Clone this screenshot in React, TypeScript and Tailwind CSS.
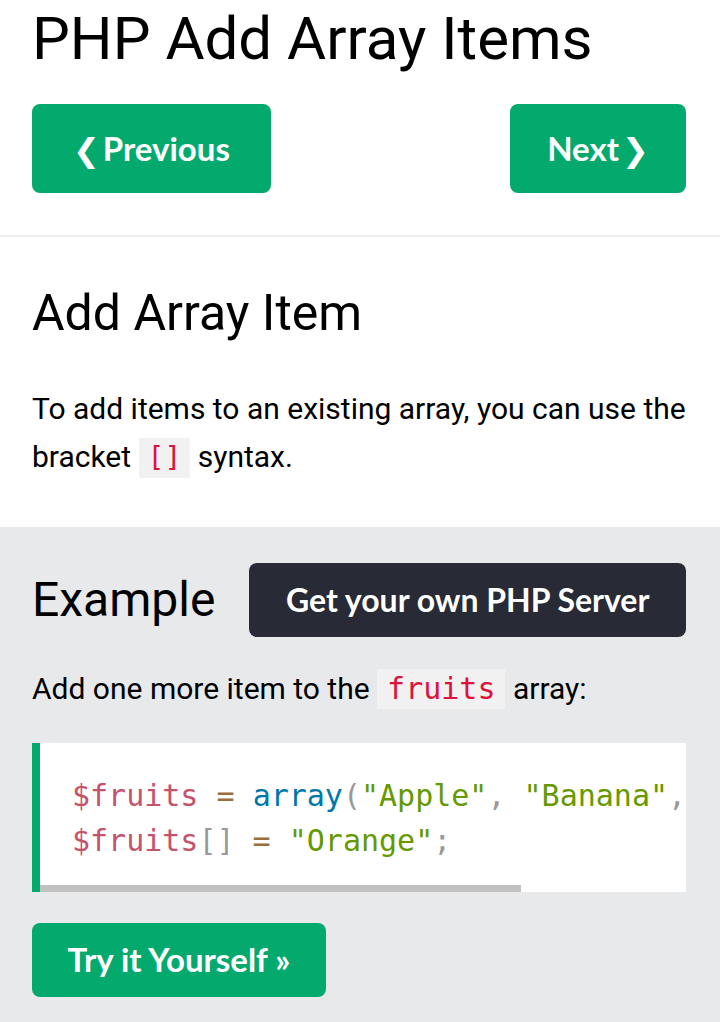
import React from 'react';

const sans = "font-['Roboto','Liberation_Sans',sans-serif]";
const btnFont = "font-['Lato','Open_Sans',sans-serif]";
const mono = "font-['DejaVu_Sans_Mono','Liberation_Mono',monospace]";

const App = () => {
  return (
    <div className={`w-[720px] bg-white text-black ${sans}`}>
      <div className="pl-[32px] pr-[34px] pt-[4px] pb-[42px]">
        <h1 className="text-[60px] leading-[70px] font-normal">PHP Add Array Items</h1>
        <div className="mt-[30px] flex justify-between">
          <button
            className={`w-[239px] h-[89px] rounded-[8px] bg-[#04AA6D] text-white text-[33px] font-bold ${btnFont}`}
          >
            <span className="font-['DejaVu_Sans',sans-serif] text-[32px] mr-[3px]">❮</span>Previous
          </button>
          <button
            className={`w-[176px] h-[89px] rounded-[8px] bg-[#04AA6D] text-white text-[33px] font-bold ${btnFont}`}
          >
            Next<span className="font-['DejaVu_Sans',sans-serif] text-[32px] ml-[3px]">❯</span>
          </button>
        </div>
      </div>
      <div className="h-[2px] bg-[#eeeeee]" />

      <div className="pl-[32px] pr-[34px] pt-[46px] pb-[46px]">
        <h2 className="text-[50px] leading-[60px] font-normal">Add Array Item</h2>
        <p className="mt-[42px] text-[30px] leading-[48px]">
          To add items to an existing array, you can use the bracket{' '}
          <code
            className={`inline-block bg-[#f1f1f1] text-[#dc143c] px-[9px] leading-[40px] text-[28px] ${mono}`}
          >
            []
          </code>{' '}
          syntax.
        </p>
      </div>

      <div className="bg-[#E7E9EB] pl-[32px] pr-[34px] pt-[36px] pb-[25px]">
        <div className="flex items-center gap-[34px]">
          <h2 className="text-[48px] leading-[60px] font-normal">Example</h2>
          <button
            className={`flex-1 h-[74px] rounded-[8px] bg-[#282A35] text-white text-[32px] font-bold ${btnFont}`}
          >
            Get your own PHP Server
          </button>
        </div>
        <p className="mt-[28px] text-[30px] leading-[48px]">
          Add one more item to the{' '}
          <code
            className={`inline-block bg-[#f1f1f1] text-[#dc143c] px-[10px] leading-[40px] text-[30px] ${mono}`}
          >
            fruits
          </code>{' '}
          array:
        </p>

        <div className="mt-[30px] bg-white border-l-[8px] border-[#04AA6D]">
          <div
            className={`overflow-hidden whitespace-pre pl-[32px] pt-[30px] pb-[22px] text-[30px] leading-[45px] ${mono}`}
          >
            <div>
              <span className="text-[#c6536c]">$fruits</span>
              <span className="text-[#9a6e3a]"> = </span>
              <span className="text-[#0077aa]">array</span>
              <span className="text-[#999999]">(</span>
              <span className="text-[#669900]">"Apple"</span>
              <span className="text-[#999999]">, </span>
              <span className="text-[#669900]">"Banana"</span>
              <span className="text-[#999999]">, </span>
              <span className="text-[#669900]">"Cherry"</span>
              <span className="text-[#999999]">);</span>
            </div>
            <div>
              <span className="text-[#c6536c]">$fruits</span>
              <span className="text-[#999999]">[]</span>
              <span className="text-[#9a6e3a]"> = </span>
              <span className="text-[#669900]">"Orange"</span>
              <span className="text-[#999999]">;</span>
            </div>
          </div>
          <div className="h-[7px]">
            <div className="h-full w-[481px] bg-[#c1c1c1]" />
          </div>
        </div>

        <button
          className={`mt-[31px] w-[294px] h-[74px] rounded-[8px] bg-[#04AA6D] text-white text-[33px] font-bold ${btnFont}`}
        >
          Try it Yourself »
        </button>
      </div>
    </div>
  );
};

export default App;
